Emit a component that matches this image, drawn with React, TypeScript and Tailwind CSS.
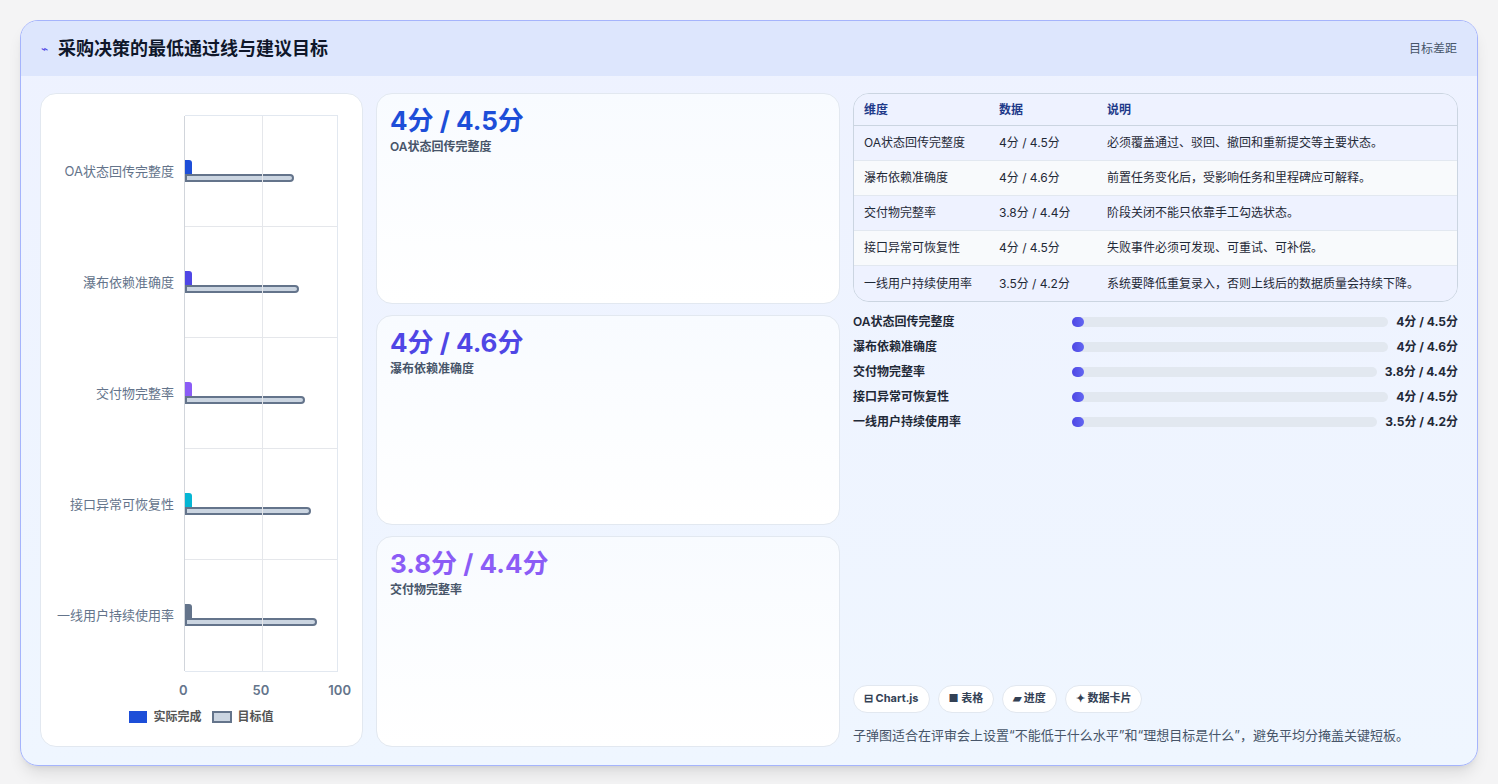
import React from "react";

const rows = [
  { n: "OA状态回传完整度", d: "4分 / 4.5分", s: "必须覆盖通过、驳回、撤回和重新提交等主要状态。", c: "#1d4ed8", t: 72 },
  { n: "瀑布依赖准确度", d: "4分 / 4.6分", s: "前置任务变化后，受影响任务和里程碑应可解释。", c: "#4f46e5", t: 75 },
  { n: "交付物完整率", d: "3.8分 / 4.4分", s: "阶段关闭不能只依靠手工勾选状态。", c: "#8b5cf6", t: 79 },
  { n: "接口异常可恢复性", d: "4分 / 4.5分", s: "失败事件必须可发现、可重试、可补偿。", c: "#06b6d4", t: 83 },
  { n: "一线用户持续使用率", d: "3.5分 / 4.2分", s: "系统要降低重复录入，否则上线后的数据质量会持续下降。", c: "#64748b", t: 87 },
];

function Chart() {
  return (
    <div className="bg-white rounded-2xl border border-[#e2e8f0] w-[323px] flex flex-col pt-[21px] pb-[20px]">
      <div className="flex flex-1">
        <div className="w-[144px] flex flex-col pt-[1px]">
          {rows.map((r) => (
            <div key={r.n} className="flex-1 flex items-center justify-end pr-[11px] text-[13px] text-[#64748b]">{r.n}</div>
          ))}
        </div>
        <div className="relative w-[153px] border-t border-r border-b border-[#e2e8f0]">
          <div className="absolute left-[77px] top-0 bottom-0 w-px bg-[#e5e7eb]" />
          <div className="absolute left-[-1px] top-0 bottom-0 w-px bg-[#d1d5db]" />
          <div className="flex flex-col h-full">
            {rows.map((r, i) => (
              <div key={r.n} className={"flex-1 flex flex-col justify-center " + (i < 4 ? "border-b border-[#e5e7eb]" : "")}>
                <div className="h-[18px] w-[7px] rounded-tr-[3px] rounded-br-[3px]" style={{ background: r.c }} />
                <div className="h-[8px] bg-[#cbd5e1] border-2 border-[#64748b] rounded-r-full" style={{ width: `${r.t * 1.52}px`, marginTop: -4 }} />
              </div>
            ))}
          </div>
        </div>
      </div>
      <div className="flex pl-[138px] w-[310px] justify-between text-[13px] font-semibold text-[#64748b] mt-[9px]">
        <span>0</span><span className="ml-[6px]">50</span><span>100</span>
      </div>
      <div className="flex items-center justify-center gap-[6px] text-[12px] text-[#555] font-semibold mt-[8px]">
        <span className="w-[18px] h-[12px] bg-[#1d4ed8]" />实际完成
        <span className="w-[20px] h-[12px] bg-[#cbd5e1] border-2 border-[#64748b] ml-[4px]" />目标值
      </div>
    </div>
  );
}

function Card({ v, l, c }: { v: string; l: string; c: string }) {
  return (
    <div className="flex-1 rounded-2xl border border-[#e2e8f0] bg-gradient-to-b from-[#f8fbff] to-white px-[13px] pt-[10px]">
      <div className="text-[26px] font-bold leading-[34px]" style={{ color: c }}>{v}</div>
      <div className="text-[12px] text-[#475569] font-semibold">{l}</div>
    </div>
  );
}

export default function App() {
  return (
    <div className="w-[1498px] h-[784px] bg-[#f4f4f5] pt-[20px] px-[20px]" style={{ fontFamily: "Inter, 'Noto Sans CJK SC', sans-serif" }}>
      <div className="h-[746px] rounded-[18px] border border-[#a5b4fc] bg-gradient-to-b from-[#eef2ff] to-[#eff6ff] shadow-lg overflow-hidden flex flex-col">
        <div className="h-[55px] bg-[#dde6fd] flex items-center justify-between px-[20px] shrink-0">
          <div className="flex items-center gap-[10px]">
            <span className="text-[#4f46e5] text-[12px]">⌁</span>
            <span className="text-[18px] font-bold text-[#0f172a]">采购决策的最低通过线与建议目标</span>
          </div>
          <span className="text-[12px] text-[#475569]">目标差距</span>
        </div>
        <div className="flex gap-[13px] px-[19px] pt-[17px] pb-[18px] flex-1">
          <Chart />
          <div className="w-[464px] flex flex-col gap-[11px]">
            <Card v="4分 / 4.5分" l="OA状态回传完整度" c="#1d4ed8" />
            <Card v="4分 / 4.6分" l="瀑布依赖准确度" c="#4f46e5" />
            <Card v="3.8分 / 4.4分" l="交付物完整率" c="#8b5cf6" />
          </div>
          <div className="flex-1 flex flex-col">
            <div className="rounded-2xl border border-[#cbd5e1] overflow-hidden text-[12px]">
              <div className="flex h-[32px] items-center bg-[#eef2ff] font-bold text-[#1e3a8a] border-b border-[#cbd5e1]">
                <div className="w-[145px] pl-[10px]">维度</div><div className="w-[108px]">数据</div><div>说明</div>
              </div>
              {rows.map((r, i) => (
                <div key={r.n} className={"flex h-[35px] items-center text-[#1f2937] " + (i % 2 ? "bg-[#f8fafc]" : "bg-[#eef2ff]") + (i < 4 ? " border-b border-[#e2e8f0]" : "")}>
                  <div className="w-[145px] pl-[10px]">{r.n}</div><div className="w-[108px]">{r.d}</div><div>{r.s}</div>
                </div>
              ))}
            </div>
            <div className="flex flex-col gap-[8px] mt-[11px]">
              {rows.map((r) => (
                <div key={r.n} className="flex items-center h-[17px] text-[12px] font-semibold text-[#1f2937]">
                  <div className="w-[219px]">{r.n}</div>
                  <div className="flex-1 h-[10px] bg-[#e2e8f0] rounded-full mr-[8px]">
                    <div className="h-full w-[12px] rounded-full bg-gradient-to-r from-[#4f46e5] to-[#6366f1]" />
                  </div>
                  <div className="font-bold">{r.d}</div>
                </div>
              ))}
            </div>
            <div className="mt-auto flex gap-[8px] text-[11px] font-bold text-[#334155]">
              {["⊟ Chart.js", "■ 表格", "▰ 进度", "✦ 数据卡片"].map((t) => (
                <span key={t} className="px-[10px] h-[28px] flex items-center rounded-full bg-white border border-[#e2e8f0]">{t}</span>
              ))}
            </div>
            <div className="text-[13px] text-[#475569] mt-[13px] mb-[2px]">子弹图适合在评审会上设置“不能低于什么水平”和“理想目标是什么”，避免平均分掩盖关键短板。</div>
          </div>
        </div>
      </div>
    </div>
  );
}
